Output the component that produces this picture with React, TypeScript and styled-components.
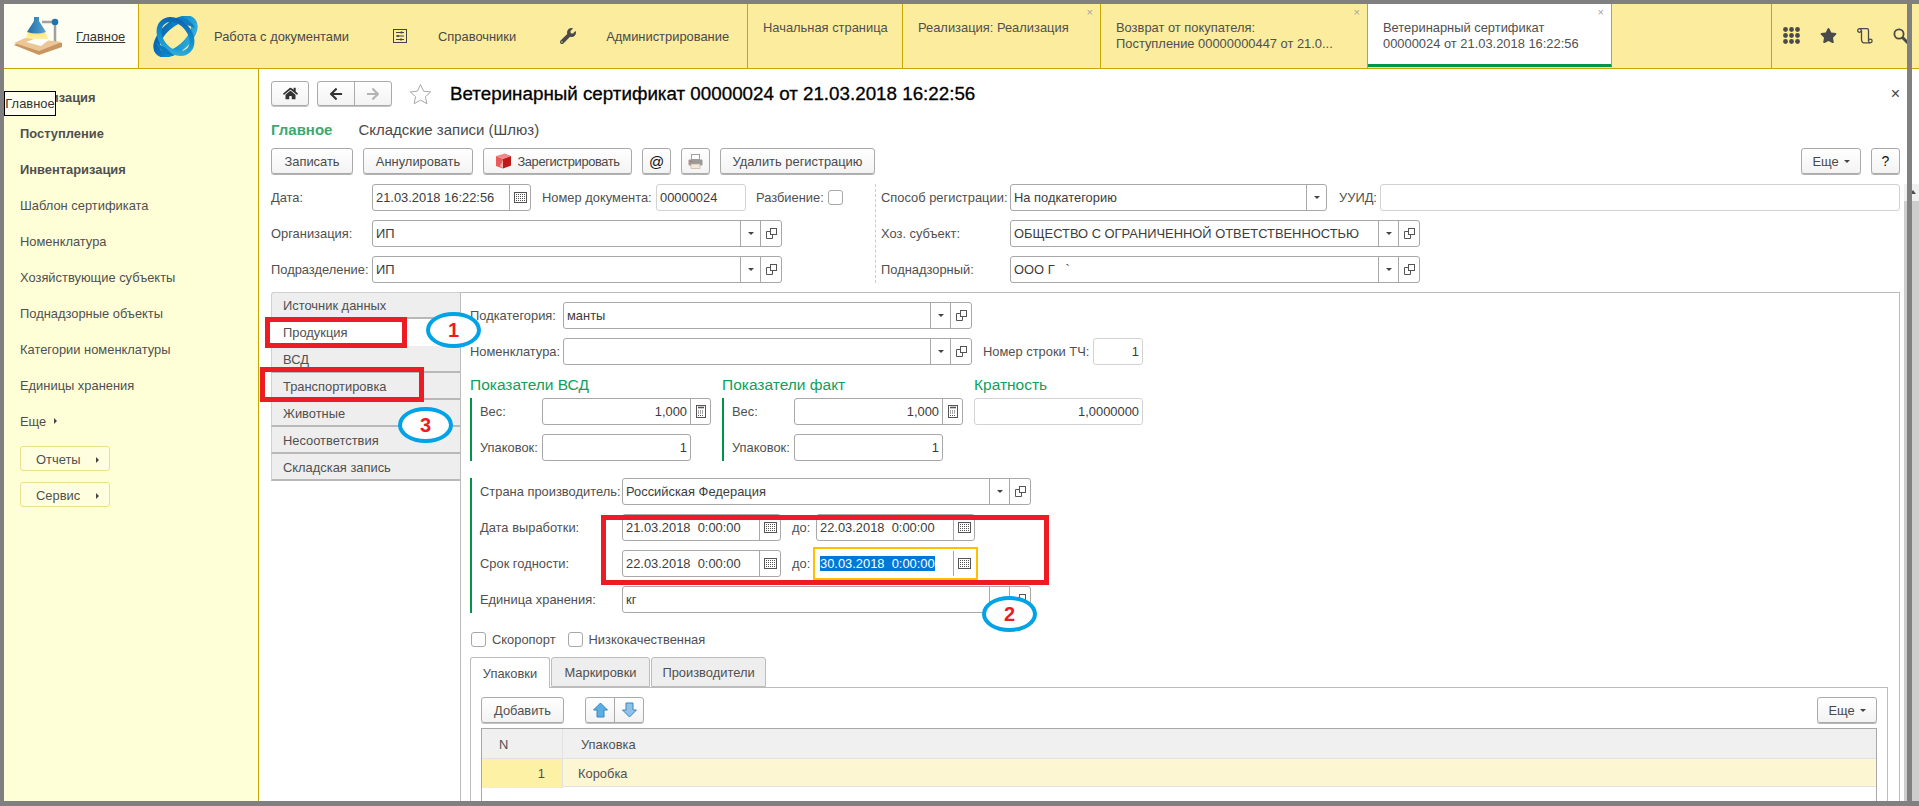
import React from 'react'
import styled, { createGlobalStyle } from 'styled-components'
import { FaHome, FaArrowLeft, FaArrowRight, FaStar, FaWrench } from 'react-icons/fa'

const GlobalStyle = createGlobalStyle`
  html, body { margin: 0; padding: 0; background: #808080; }
  * { box-sizing: border-box; }
  body { font-family: "Liberation Sans", Arial, sans-serif; font-size: 12.9px; color: #505050; }
`

const Page = styled.div`
  position: relative;
  width: 1919px;
  height: 806px;
  padding: 4px 0 5px 4px;
  background: #808080;
  overflow: hidden;
`

const Window = styled.div`
  display: flex;
  flex-direction: column;
  height: 100%;
  background: #fff;
  overflow: hidden;
`

// top bar
const Header = styled.header`
  display: flex;
  flex: none;
  height: 65px;
  background: #fbec9e;
  border-bottom: 1px solid #c8a800;
`

const HomeBlock = styled.div`
  display: flex;
  align-items: center;
  gap: 13px;
  width: 135px;
  padding-left: 9px;
  background: #fefef2;
  border-right: 1px solid #c8a800;
`

const HomeLink = styled.a`
  color: #333;
  text-decoration: underline;
`

const Nav = styled.nav`
  display: flex;
  align-items: center;
  gap: 44px;
  width: 609px;
  padding-left: 13px;
  border-right: 1px solid #c8a800;
  color: #4a4a4a;
`

const NavEntry = styled.div<{ $gap: number }>`
  display: flex;
  align-items: center;
  gap: ${p => p.$gap}px;
  white-space: nowrap;
`

const Tab = styled.div<{ $w: number; $active?: boolean }>`
  position: relative;
  flex: none;
  width: ${p => p.$w}px;
  padding: 16px 0 0 15px;
  line-height: 16px;
  white-space: nowrap;
  background: ${p => (p.$active ? '#fff' : 'transparent')};
  border-right: 1px solid #c8a800;
  border-bottom: ${p => (p.$active ? '3px solid #009646' : '0')};
  height: ${p => (p.$active ? '63px' : '64px')};
`

const TabClose = styled.span`
  position: absolute;
  top: 3px;
  right: 7px;
  font-size: 11px;
  line-height: 11px;
  color: #a5a5a5;
`

const TabSpacer = styled.div`
  width: 160px;
  flex: none;
  border-right: 1px solid #c8a800;
`

const HeaderTools = styled.div`
  display: flex;
  align-items: center;
  gap: 20px;
  padding-left: 11px;
  color: #4a4a4a;
  margin-top: -1px;
`

// body
const Body = styled.div`
  display: flex;
  flex: 1;
  min-height: 0;
`

const Sidebar = styled.aside`
  position: relative;
  flex: none;
  width: 255px;
  padding: 10px 0 0 16px;
  background: #ffffd7;
  border-right: 1px solid #c8a800;
`

const SideItem = styled.div<{ $bold?: boolean }>`
  display: flex;
  align-items: center;
  gap: 8px;
  height: 36px;
  font-weight: ${p => (p.$bold ? 700 : 400)};
  white-space: nowrap;
`

const SideButton = styled.div`
  display: flex;
  align-items: center;
  justify-content: space-between;
  width: 90px;
  height: 25px;
  margin-bottom: 11px;
  padding: 2px 10px 0 15px;
  border: 1px solid #ecdf8c;
  border-radius: 3px;
  background: #ffffe0;
`

const SideButtons = styled.div`
  margin-top: 7px;
`

const Arrow = styled.span`
  width: 0;
  height: 0;
  border-left: 3px solid #444;
  border-top: 3px solid transparent;
  border-bottom: 3px solid transparent;
`

const Tooltip = styled.div`
  position: absolute;
  left: 0;
  top: 22px;
  width: 52px;
  height: 25px;
  line-height: 24px;
  text-align: center;
  background: #fffff0;
  border: 1px solid #000;
  color: #333;
`

const Main = styled.main`
  display: flex;
  flex: 1;
  min-width: 0;
`

const Content = styled.div`
  display: flex;
  flex-direction: column;
  width: 1645px;
  padding: 12px 4px 0 12px;
`

const ScrollTrack = styled.div`
  flex: none;
  width: 15px;
  margin-top: 115px;
  background: #cdcdcd;
`

const ScrollArrow = styled.div`
  display: flex;
  justify-content: flex-end;
  height: 17px;
  padding: 6px 3px 0 0;
  background: #f0f0f0;
`

const ScrollCaret = styled.span`
  width: 0;
  height: 0;
  border-bottom: 4px solid #505050;
  border-left: 3px solid transparent;
  border-right: 3px solid transparent;
`

const TitleBar = styled.div`
  position: relative;
  display: flex;
  align-items: center;
  height: 25px;
`

const StarSlot = styled.div`
  display: flex;
  align-items: center;
  margin: 0 18px 0 17px;
`

const Title = styled.h1`
  margin: 0;
  font-size: 18.8px;
  line-height: 25px;
  font-weight: 400;
  color: #000;
  -webkit-text-stroke: 0.3px #000;
  white-space: nowrap;
`

const CloseForm = styled.span`
  position: absolute;
  right: 0;
  top: 0;
  font-size: 16px;
  line-height: 25px;
  color: #444;
`

const IconButton = styled.div<{ $w: number; $mr?: number }>`
  display: flex;
  align-items: center;
  justify-content: center;
  flex: none;
  width: ${p => p.$w}px;
  height: 100%;
  margin-right: ${p => p.$mr ?? 0}px;
  background: linear-gradient(#fff, #f3f3f3);
  border: 1px solid #aaa;
  border-radius: 3px;
  box-shadow: 0 1px 0 #c4c4c4;
`

const ButtonGroup = styled.div<{ $w: number }>`
  display: flex;
  flex: none;
  width: ${p => p.$w}px;
  height: 100%;
  border: 1px solid #aaa;
  border-radius: 3px;
  background: linear-gradient(#fff, #f3f3f3);
  box-shadow: 0 1px 0 #c4c4c4;
`

const GroupCell = styled.div`
  display: flex;
  align-items: center;
  justify-content: center;
  flex: 1;
  & + & { border-left: 1px solid #aaa; }
`

const FormTabs = styled.div`
  display: flex;
  align-items: center;
  gap: 26px;
  height: 20px;
  margin-top: 13px;
  font-size: 15px;
`

const FormTab = styled.span<{ $active?: boolean }>`
  color: ${p => (p.$active ? '#3ca870' : '#4a4a4a')};
  font-weight: ${p => (p.$active ? 700 : 400)};
`

const CommandBar = styled.div`
  display: flex;
  align-items: stretch;
  gap: 10px;
  height: 26px;
  margin-top: 9px;
  flex: none;
`

const Button = styled.div<{ $w: number; $push?: boolean }>`
  display: flex;
  align-items: center;
  justify-content: center;
  gap: 5px;
  flex: none;
  width: ${p => p.$w}px;
  margin-left: ${p => (p.$push ? 'auto' : '0')};
  background: linear-gradient(#fff, #f3f3f3);
  border: 1px solid #aaa;
  border-radius: 3px;
  box-shadow: 0 1px 0 #b4b4b4;
  white-space: nowrap;
  color: #4a4a4a;
`

const TightText = styled.span`
  letter-spacing: -0.4px;
`

const Glyph = styled.span<{ $size: number }>`
  color: #111;
  font-size: ${p => p.$size}px;
`

const Caret = styled.span`
  width: 0;
  height: 0;
  border-top: 3px solid #444;
  border-left: 3px solid transparent;
  border-right: 3px solid transparent;
`

const HeaderForm = styled.div`
  display: grid;
  grid-template-columns: 604px 1fr;
  margin: 10px 0 9px;
  flex: none;
`

const FormColumn = styled.div<{ $divided?: boolean }>`
  display: flex;
  flex-direction: column;
  gap: 9px;
  padding-left: ${p => (p.$divided ? '5px' : '0')};
  border-left: ${p => (p.$divided ? '1px dashed #ccc' : '0')};
`

const Row = styled.div`
  display: flex;
  align-items: center;
  height: 27px;
  flex: none;
`

const Label = styled.label<{ $w: number; $ml?: number }>`
  flex: none;
  width: ${p => p.$w}px;
  margin-left: ${p => p.$ml ?? 0}px;
  white-space: nowrap;
`

const FieldBox = styled.div<{ $w?: number; $light?: boolean; $focused?: boolean }>`
  display: flex;
  flex: ${p => (p.$w ? 'none' : '1')};
  width: ${p => (p.$w ? `${p.$w}px` : 'auto')};
  height: 27px;
  background: #fff;
  border: 1px solid ${p => (p.$focused ? 'transparent' : p.$light ? '#d2d2d2' : '#a8a8a8')};
  border-radius: ${p => (p.$focused ? '0' : '3px')};
  outline: ${p => (p.$focused ? '2px solid #ffc000' : 'none')};
  outline-offset: 1px;
`

const FieldValue = styled.div<{ $right?: boolean }>`
  flex: 1;
  min-width: 0;
  padding: 0 3px;
  line-height: 25px;
  color: #3c3c3c;
  white-space: pre;
  overflow: hidden;
  text-align: ${p => (p.$right ? 'right' : 'left')};
`

const FieldCell = styled.div<{ $w: number }>`
  display: flex;
  align-items: center;
  justify-content: center;
  flex: none;
  width: ${p => p.$w}px;
  border-left: 1px solid #a8a8a8;
`

const Selection = styled.span`
  background: #0078d7;
  color: #fff;
`

const CheckBox = styled.span<{ $ml?: number }>`
  flex: none;
  width: 15px;
  height: 15px;
  margin-left: ${p => p.$ml ?? 0}px;
  background: #fff;
  border: 1px solid #a8a8a8;
  border-radius: 3px;
`

const Lower = styled.div`
  display: flex;
  flex: 1;
  min-height: 0;
`

const SideTabs = styled.div`
  flex: none;
  width: 189px;
`

const SideTab = styled.div<{ $active?: boolean }>`
  height: 27px;
  padding-left: 11px;
  line-height: 27px;
  background: ${p => (p.$active ? '#fff' : '#eeeeee')};
  border-left: 1px solid ${p => (p.$active ? '#fff' : '#d0d0d0')};
  border-bottom: 2px solid ${p => (p.$active ? '#fff' : '#b8b8b8')};
  &:first-child { border-top: 1px solid #d0d0d0; border-radius: 3px 0 0 0; line-height: 25px; }
`

const Panel = styled.div`
  display: flex;
  flex-direction: column;
  flex: 1;
  min-width: 0;
  padding: 9px 11px 0 9px;
  border: 1px solid #bcbcbc;
  border-bottom: 0;
`

const RowStack = styled.div`
  display: flex;
  flex-direction: column;
  gap: 9px;
  flex: none;
`

const Metrics = styled.div`
  display: grid;
  grid-template-columns: repeat(3, 252px);
  margin-top: 10px;
  flex: none;
`

const MetricHeading = styled.h3`
  height: 23px;
  margin: 0;
  font-size: 15.5px;
  line-height: 20px;
  font-weight: 400;
  color: #10a05c;
`

const GreenGroup = styled.div<{ $mt?: number }>`
  display: flex;
  flex-direction: column;
  gap: 9px;
  flex: none;
  margin-top: ${p => p.$mt ?? 0}px;
  padding-left: 8px;
  border-left: 2px solid #00964a;
`

const ChecksRow = styled.div`
  display: flex;
  align-items: center;
  height: 15px;
  margin-top: 19px;
  flex: none;
`

const CheckText = styled.span`
  margin-left: 6px;
`

const PaneTabs = styled.div`
  display: flex;
  height: 30px;
  margin-top: 10px;
  flex: none;
`

const PaneTab = styled.div<{ $w: number; $active?: boolean }>`
  display: flex;
  align-items: center;
  justify-content: center;
  width: ${p => p.$w}px;
  margin-right: 1px;
  margin-bottom: ${p => (p.$active ? '-1px' : '0')};
  background: ${p => (p.$active ? '#fff' : '#eeeeee')};
  border: 1px solid #bcbcbc;
  border-bottom: ${p => (p.$active ? '0' : '1px solid #bcbcbc')};
  border-radius: 3px 3px 0 0;
  position: relative;
`

const Pane = styled.div`
  flex: 1;
  padding: 9px 10px 0;
  border: 1px solid #bcbcbc;
  border-bottom: 0;
`

const PaneBar = styled.div`
  display: flex;
  height: 26px;
  gap: 21px;
`

const Table = styled.div`
  margin-top: 5px;
  border: 1px solid #a8a8a8;
  border-bottom: 0;
  height: 80px;
`

const TableRow = styled.div<{ $header?: boolean }>`
  display: grid;
  grid-template-columns: 80px 1fr;
  height: ${p => (p.$header ? '30px' : '28px')};
  line-height: ${p => (p.$header ? '31px' : '29px')};
  border-bottom: 1px solid #e2e2e2;
  background: ${p => (p.$header ? '#f0f0f0' : '#fdf6d2')};
`

const TableCell = styled.div<{ $current?: boolean; $right?: boolean; $pad: number }>`
  padding: ${p => (p.$right ? `0 ${p.$pad}px 0 0` : `0 0 0 ${p.$pad}px`)};
  text-align: ${p => (p.$right ? 'right' : 'left')};
  background: ${p => (p.$current ? '#fdf1a5' : 'transparent')};
  & + & { border-left: 1px solid #e2e2e2; }
`

// scan frame and hand drawn marks lying over the screenshot
const FrameStripe = styled.div`
  position: absolute;
  top: 0;
  bottom: 0;
  left: 1907px;
  width: 5px;
  background: #808080;
`

const RedBox = styled.div<{ $x: number; $y: number; $w: number; $h: number }>`
  position: absolute;
  left: ${p => p.$x}px;
  top: ${p => p.$y}px;
  width: ${p => p.$w}px;
  height: ${p => p.$h}px;
  border: 5px solid #ed1c24;
  pointer-events: none;
`

const Oval = styled.div<{ $x: number; $y: number }>`
  position: absolute;
  left: ${p => p.$x}px;
  top: ${p => p.$y}px;
  width: 55px;
  height: 36px;
  display: flex;
  align-items: center;
  justify-content: center;
  background: #fff;
  border: 4px solid #00a2e8;
  border-radius: 50%;
  color: #ed1c24;
  font-size: 20px;
  font-weight: 700;
  line-height: 1;
`

const LampLogo = () => (
  <svg width="50" height="41" viewBox="0 0 50 41">
    <defs>
      <linearGradient id="shade" x1="0" x2="1" y1="0" y2="0">
        <stop offset="0" stopColor="#1f6fa8" />
        <stop offset="1" stopColor="#5ba4d0" />
      </linearGradient>
      <linearGradient id="cone" x1="0" x2="0" y1="0" y2="1">
        <stop offset="0" stopColor="#ffe66a" />
        <stop offset="1" stopColor="#fff8d0" />
      </linearGradient>
    </defs>
    <path d="M29 6H42V27" fill="none" stroke="#a0a0a0" strokeWidth="2.5" />
    <circle cx="42" cy="6" r="3.3" fill="#1b74ad" />
    <path d="M15 16H32L37 27H11Z" fill="url(#cone)" />
    <path d="M21 1H26V5L33 16Q24 19 14 16L21 5Z" fill="url(#shade)" />
    <path d="M1 29L26 39L49 31V27L12 23Z" fill="#c99562" />
    <path d="M1 27L12 22L49 26L26 35Z" fill="#ecc697" />
    <path d="M13 26L21 23H37L28 30Z" fill="#fff" />
  </svg>
)

const SwirlLogo = () => (
  <svg width="47" height="41" viewBox="0 0 47 41">
    <defs>
      <linearGradient id="swirl" x1="0" x2="1" y1="0" y2="1">
        <stop offset="0" stopColor="#0a5aa8" />
        <stop offset="0.5" stopColor="#0d8ccc" />
        <stop offset="1" stopColor="#39b5de" />
      </linearGradient>
    </defs>
    <g fill="none" stroke="url(#swirl)">
      <ellipse cx="23.5" cy="20.5" rx="23" ry="12" transform="rotate(-42 23.5 20.5)" strokeWidth="6.5" />
      <ellipse cx="23.5" cy="20.5" rx="19" ry="14" transform="rotate(48 23.5 20.5)" strokeWidth="5" />
    </g>
    <path d="M3 26Q9 38 22 40L14 32Z M43 12Q38 2 26 1L35 9Z" fill="#0d7cc0" />
  </svg>
)

const SlidersIcon = () => (
  <svg width="14" height="14" viewBox="0 0 14 14" fill="none" stroke="#444">
    <rect x="0.5" y="0.5" width="13" height="13" />
    <path d="M3 3.5H11M3 7H11M3 10.5H11" />
    <path d="M8.5 2.5v2M5 6v2M8 9.5v2" strokeWidth="1.6" />
  </svg>
)

const AppsIcon = () => (
  <svg width="17" height="17" viewBox="0 0 17 17" fill="#4a4a4a">
    {[2.5, 8.5, 14.5].map(y =>
      [2.5, 8.5, 14.5].map(x => <circle key={`${x}-${y}`} cx={x} cy={y} r="2.4" />)
    )}
  </svg>
)

const HistoryIcon = () => (
  <svg width="16" height="16" viewBox="0 0 16 16" fill="none" stroke="#4a4a4a" strokeWidth="1.3">
    <circle cx="2.5" cy="2.5" r="1.8" />
    <path d="M2.5 0.7H10Q11.5 0.7 11.5 2.5V13" />
    <path d="M4.5 2.5V11Q4.5 14.8 7 14.8H13" />
    <circle cx="13.3" cy="13" r="1.8" />
  </svg>
)

const SearchIcon = () => (
  <svg width="16" height="16" viewBox="0 0 16 16" fill="none" stroke="#4a4a4a">
    <circle cx="6" cy="6" r="4.6" strokeWidth="1.8" />
    <path d="M9.5 9.5L15 15" strokeWidth="3" />
  </svg>
)

const FavStar = () => (
  <svg width="23" height="22" viewBox="0 0 23 22" fill="#fff" stroke="#a8a8a8">
    <path d="M11.5 1.5L14.6 8.2L21.7 8.9L16.4 13.7L17.9 20.7L11.5 17.1L5.1 20.7L6.6 13.7L1.3 8.9L8.4 8.2Z" />
  </svg>
)

const CubeIcon = () => (
  <svg width="17" height="16" viewBox="0 0 17 16">
    <path d="M1 3L10 0.5L16 3L8 6Z" fill="#f08a8a" />
    <path d="M1 3L8 6V15.5L1 13Z" fill="#e95a5a" />
    <path d="M8 6L16 3V12.5L8 15.5Z" fill="#c01818" />
    <path d="M5 13L8 7V15Z" fill="#f6b0b0" />
  </svg>
)

const PrinterIcon = () => (
  <svg width="15" height="15" viewBox="0 0 15 15">
    <rect x="3.5" y="0.5" width="8" height="5" fill="#fff" stroke="#a0a0a0" />
    <rect x="0.5" y="5.5" width="14" height="6" rx="1" fill="#9a9a9a" />
    <rect x="2" y="7" width="2" height="1" fill="#e05a5a" />
    <rect x="3" y="10" width="9" height="4.5" fill="#f4e8d8" stroke="#b8a890" strokeWidth="0.6" />
  </svg>
)

const CalendarIcon = () => (
  <svg width="13" height="11" viewBox="0 0 13 11" fill="none" stroke="#555">
    <rect x="0.5" y="0.5" width="12" height="10" />
    <path d="M2 2.5H11M2 4.5H11M2 6.5H11M2 8.5H11" strokeDasharray="1 1" />
  </svg>
)

const CalcIcon = () => (
  <svg width="10" height="13" viewBox="0 0 10 13" fill="none" stroke="#555">
    <rect x="0.5" y="0.5" width="9" height="12" />
    <path d="M2 2.5H8" strokeWidth="1.6" />
    <path d="M2 6H8M2 8H8M2 10.5H8" strokeDasharray="1 1" />
  </svg>
)

const OpenIcon = () => (
  <svg width="11" height="11" viewBox="0 0 11 11" fill="none" stroke="#555">
    <rect x="4.5" y="0.5" width="6" height="6" />
    <path d="M4.5 3.5H0.5V10.5H6.5V6.5" />
  </svg>
)

const MoveIcon = ({ down }: { down?: boolean }) => (
  <svg width="15" height="16" viewBox="0 0 15 16">
    <path
      d={down ? 'M4 1H11V8H14.5L7.5 15L0.5 8H4Z' : 'M7.5 1L14.5 8H11V15H4V8H0.5Z'}
      fill={down ? '#8ec1ea' : '#5aaee4'}
      stroke="#3d85b8"
    />
  </svg>
)

type FieldProps = {
  w?: number
  value?: React.ReactNode
  right?: boolean
  light?: boolean
  focused?: boolean
  kind?: 'select' | 'open' | 'date' | 'calc'
}

const Field = ({ w, value, right, light, focused, kind }: FieldProps) => (
  <FieldBox $w={w} $light={light} $focused={focused}>
    <FieldValue $right={right}>{value}</FieldValue>
    {kind === 'select' && (
      <FieldCell $w={20}>
        <Caret />
      </FieldCell>
    )}
    {kind === 'open' && (
      <>
        <FieldCell $w={20}>
          <Caret />
        </FieldCell>
        <FieldCell $w={21}>
          <OpenIcon />
        </FieldCell>
      </>
    )}
    {kind === 'date' && (
      <FieldCell $w={21}>
        <CalendarIcon />
      </FieldCell>
    )}
    {kind === 'calc' && (
      <FieldCell $w={20}>
        <CalcIcon />
      </FieldCell>
    )}
  </FieldBox>
)

const sideItems = [
  'Шаблон сертификата',
  'Номенклатура',
  'Хозяйствующие субъекты',
  'Поднадзорные объекты',
  'Категории номенклатуры',
  'Единицы хранения'
]

const sideTabs = [
  'Источник данных',
  'Продукция',
  'ВСД',
  'Транспортировка',
  'Животные',
  'Несоответствия',
  'Складская запись'
]

export default function App() {
  return (
    <Page>
      <GlobalStyle />
      <Window>
        <Header>
          <HomeBlock>
            <LampLogo />
            <HomeLink>Главное</HomeLink>
          </HomeBlock>
          <Nav>
            <NavEntry $gap={15}>
              <SwirlLogo />
              Работа с документами
            </NavEntry>
            <NavEntry $gap={31}>
              <SlidersIcon />
              Справочники
            </NavEntry>
            <NavEntry $gap={30}>
              <FaWrench size={16} />
              Администрирование
            </NavEntry>
          </Nav>
          <Tab $w={155}>Начальная страница</Tab>
          <Tab $w={198}>
            Реализация: Реализация
            <TabClose>×</TabClose>
          </Tab>
          <Tab $w={267}>
            Возврат от покупателя:
            <br />
            Поступление 00000000447 от 21.0...
            <TabClose>×</TabClose>
          </Tab>
          <Tab $w={244} $active>
            Ветеринарный сертификат
            <br />
            00000024 от 21.03.2018 16:22:56
            <TabClose>×</TabClose>
          </Tab>
          <TabSpacer />
          <HeaderTools>
            <AppsIcon />
            <FaStar size={17} />
            <HistoryIcon />
            <SearchIcon />
          </HeaderTools>
        </Header>
        <Body>
          <Sidebar>
            <SideItem $bold>Реализация</SideItem>
            <SideItem $bold>Поступление</SideItem>
            <SideItem $bold>Инвентаризация</SideItem>
            {sideItems.map(item => (
              <SideItem key={item}>{item}</SideItem>
            ))}
            <SideItem>
              Еще <Arrow />
            </SideItem>
            <SideButtons>
              <SideButton>
                Отчеты <Arrow />
              </SideButton>
              <SideButton>
                Сервис <Arrow />
              </SideButton>
            </SideButtons>
            <Tooltip>Главное</Tooltip>
          </Sidebar>
          <Main>
            <Content>
              <TitleBar>
                <IconButton $w={38} $mr={8}>
                  <FaHome size={15} color="#333" />
                </IconButton>
                <ButtonGroup $w={75}>
                  <GroupCell>
                    <FaArrowLeft size={14} color="#333" />
                  </GroupCell>
                  <GroupCell>
                    <FaArrowRight size={14} color="#b4b4b4" />
                  </GroupCell>
                </ButtonGroup>
                <StarSlot>
                  <FavStar />
                </StarSlot>
                <Title>Ветеринарный сертификат 00000024 от 21.03.2018 16:22:56</Title>
                <CloseForm>×</CloseForm>
              </TitleBar>
              <FormTabs>
                <FormTab $active>Главное</FormTab>
                <FormTab>Складские записи (Шлюз)</FormTab>
              </FormTabs>
              <CommandBar>
                <Button $w={82}>Записать</Button>
                <Button $w={110}>Аннулировать</Button>
                <Button $w={149}>
                  <CubeIcon />
                  <TightText>Зарегистрировать</TightText>
                </Button>
                <Button $w={29}>
                  <Glyph $size={15}>@</Glyph>
                </Button>
                <Button $w={29}>
                  <PrinterIcon />
                </Button>
                <Button $w={155}>Удалить регистрацию</Button>
                <Button $w={60} $push>
                  Еще <Caret />
                </Button>
                <Button $w={29}>
                  <Glyph $size={14}>?</Glyph>
                </Button>
              </CommandBar>
              <HeaderForm>
                <FormColumn>
                  <Row>
                    <Label $w={101}>Дата:</Label>
                    <Field w={159} value="21.03.2018 16:22:56" kind="date" />
                    <Label $w={114} $ml={11}>
                      Номер документа:
                    </Label>
                    <Field w={90} value="00000024" light />
                    <Label $w={72} $ml={10}>
                      Разбиение:
                    </Label>
                    <CheckBox />
                  </Row>
                  <Row>
                    <Label $w={101}>Организация:</Label>
                    <Field w={410} value="ИП" kind="open" />
                  </Row>
                  <Row>
                    <Label $w={101}>Подразделение:</Label>
                    <Field w={410} value="ИП" kind="open" />
                  </Row>
                </FormColumn>
                <FormColumn $divided>
                  <Row>
                    <Label $w={129}>Способ регистрации:</Label>
                    <Field w={317} value="На подкатегорию" kind="select" />
                    <Label $w={41} $ml={12}>
                      УУИД:
                    </Label>
                    <Field light />
                  </Row>
                  <Row>
                    <Label $w={129}>Хоз. субъект:</Label>
                    <Field w={410} value="ОБЩЕСТВО С ОГРАНИЧЕННОЙ ОТВЕТСТВЕННОСТЬЮ" kind="open" />
                  </Row>
                  <Row>
                    <Label $w={129}>Поднадзорный:</Label>
                    <Field w={410} value="ООО Г   `" kind="open" />
                  </Row>
                </FormColumn>
              </HeaderForm>
              <Lower>
                <SideTabs>
                  {sideTabs.map(tab => (
                    <SideTab key={tab} $active={tab === 'Продукция'}>
                      {tab}
                    </SideTab>
                  ))}
                </SideTabs>
                <Panel>
                  <RowStack>
                    <Row>
                      <Label $w={93}>Подкатегория:</Label>
                      <Field w={409} value="манты" kind="open" />
                    </Row>
                    <Row>
                      <Label $w={93}>Номенклатура:</Label>
                      <Field w={409} kind="open" />
                      <Label $w={110} $ml={11}>
                        Номер строки ТЧ:
                      </Label>
                      <Field w={50} value="1" right light />
                    </Row>
                  </RowStack>
                  <Metrics>
                    <div>
                      <MetricHeading>Показатели ВСД</MetricHeading>
                      <GreenGroup>
                        <Row>
                          <Label $w={62}>Вес:</Label>
                          <Field w={169} value="1,000" right kind="calc" />
                        </Row>
                        <Row>
                          <Label $w={62}>Упаковок:</Label>
                          <Field w={149} value="1" right />
                        </Row>
                      </GreenGroup>
                    </div>
                    <div>
                      <MetricHeading>Показатели факт</MetricHeading>
                      <GreenGroup>
                        <Row>
                          <Label $w={62}>Вес:</Label>
                          <Field w={169} value="1,000" right kind="calc" />
                        </Row>
                        <Row>
                          <Label $w={62}>Упаковок:</Label>
                          <Field w={149} value="1" right />
                        </Row>
                      </GreenGroup>
                    </div>
                    <div>
                      <MetricHeading>Кратность</MetricHeading>
                      <Row>
                        <Field w={169} value="1,0000000" right light />
                      </Row>
                    </div>
                  </Metrics>
                  <GreenGroup $mt={17}>
                    <Row>
                      <Label $w={142}>Страна производитель:</Label>
                      <Field w={409} value="Российская Федерация" kind="open" />
                    </Row>
                    <Row>
                      <Label $w={142}>Дата выработки:</Label>
                      <Field w={159} value="21.03.2018  0:00:00" kind="date" />
                      <Label $w={24} $ml={11}>
                        до:
                      </Label>
                      <Field w={159} value="22.03.2018  0:00:00" kind="date" />
                    </Row>
                    <Row>
                      <Label $w={142}>Срок годности:</Label>
                      <Field w={159} value="22.03.2018  0:00:00" kind="date" />
                      <Label $w={24} $ml={11}>
                        до:
                      </Label>
                      <Field
                        w={159}
                        focused
                        value={<Selection>30.03.2018  0:00:00</Selection>}
                        kind="date"
                      />
                    </Row>
                    <Row>
                      <Label $w={142}>Единица хранения:</Label>
                      <Field w={409} value="кг" kind="open" />
                    </Row>
                  </GreenGroup>
                  <ChecksRow>
                    <CheckBox $ml={1} />
                    <CheckText>Скоропорт</CheckText>
                    <CheckBox $ml={12} />
                    <CheckText>Низкокачественная</CheckText>
                  </ChecksRow>
                  <PaneTabs>
                    <PaneTab $w={80} $active>
                      Упаковки
                    </PaneTab>
                    <PaneTab $w={99}>Маркировки</PaneTab>
                    <PaneTab $w={115}>Производители</PaneTab>
                  </PaneTabs>
                  <Pane>
                    <PaneBar>
                      <IconButton $w={83}>Добавить</IconButton>
                      <ButtonGroup $w={59}>
                        <GroupCell>
                          <MoveIcon />
                        </GroupCell>
                        <GroupCell>
                          <MoveIcon down />
                        </GroupCell>
                      </ButtonGroup>
                      <Button $w={60} $push>
                        Еще <Caret />
                      </Button>
                    </PaneBar>
                    <Table>
                      <TableRow $header>
                        <TableCell $pad={17}>N</TableCell>
                        <TableCell $pad={18}>Упаковка</TableCell>
                      </TableRow>
                      <TableRow>
                        <TableCell $current $right $pad={17}>
                          1
                        </TableCell>
                        <TableCell $pad={15}>Коробка</TableCell>
                      </TableRow>
                    </Table>
                  </Pane>
                </Panel>
              </Lower>
            </Content>
            <ScrollTrack>
              <ScrollArrow>
                <ScrollCaret />
              </ScrollArrow>
            </ScrollTrack>
          </Main>
        </Body>
      </Window>
      <FrameStripe />
      <RedBox $x={265} $y={317} $w={142} $h={31} />
      <RedBox $x={260} $y={367} $w={164} $h={35} />
      <RedBox $x={601} $y={515} $w={448} $h={70} />
      <Oval $x={426} $y={312}>1</Oval>
      <Oval $x={398} $y={407}>3</Oval>
      <Oval $x={982} $y={596}>2</Oval>
    </Page>
  )
}
